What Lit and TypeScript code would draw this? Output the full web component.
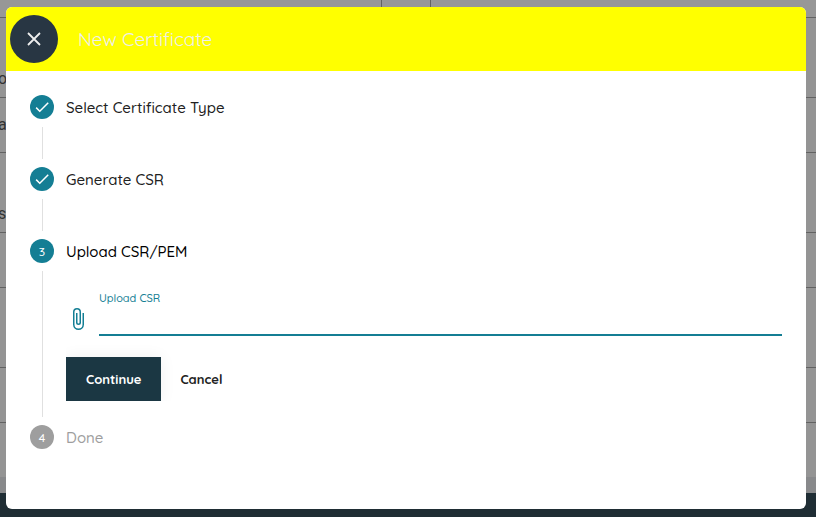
import { LitElement, html, css, svg } from "lit";
import { customElement, state } from "lit/decorators.js";
import { classMap } from "lit/directives/class-map.js";

interface Row {
  text: string;
  tall: boolean;
}

const rows: Row[] = [
  { text: "o", tall: true },
  { text: "a", tall: false },
  { text: "s", tall: true },
  { text: "", tall: false },
  { text: "", tall: true },
  { text: "", tall: false },
  { text: "", tall: false },
];

@customElement("page-backdrop")
class PageBackdrop extends LitElement {
  static styles = css`
    :host {
      display: flex;
      flex-direction: column;
      overflow: hidden;
      background: #88898b;
      color: #333;
      font: 16px/20px Roboto, sans-serif;
    }
    .head {
      display: grid;
      grid-template-columns: 381fr 49fr 386fr;
      height: 17px;
      background: #979797;
    }
    .cell + .cell {
      border-left: 1px solid #626262;
    }
    .row {
      box-sizing: border-box;
      height: 55px;
      border-top: 1px solid #626262;
      background: #949494;
      display: flex;
      align-items: center;
      text-indent: -2px;
    }
    .tall {
      height: 80px;
      align-items: flex-end;
      padding-bottom: 8px;
    }
    .foot {
      margin-top: auto;
      height: 24px;
      background: #1f2d34;
    }
  `;
  render() {
    return html`
      <div class="head">
        <div class="cell"></div>
        <div class="cell"></div>
        <div class="cell"></div>
      </div>
      ${rows.map((r) => html`<div class=${classMap({ row: true, tall: r.tall })}>${r.text}</div>`)}
      <div class="foot"></div>
    `;
  }
}

const check = svg`<svg class="check" viewBox="0 0 24 24" aria-hidden="true">
  <path d="M21 7 9 19l-5.500-5.500 1.410-1.410L9 16.170 19.590 5.590z" fill="currentColor"/></svg>`;

@customElement("app-root")
class AppRoot extends LitElement {
  static styles = css`
    :host {
      display: grid;
      min-height: 100vh;
      font-family: Quicksand, Lato, sans-serif;
      color: #212121;
    }
    page-backdrop,
    .dialog {
      grid-area: 1 / 1;
      min-width: 0;
    }
    .dialog {
      z-index: 1;
      margin: 7px 10px 8px 6px;
      border-radius: 6px;
      background: #fff;
      overflow: hidden;
    }
    .bar {
      display: flex;
      align-items: center;
      gap: 20px;
      height: 64px;
      padding: 0 4px;
      box-sizing: border-box;
      background: #ff0;
    }
    .close {
      display: grid;
      place-items: center;
      width: 48px;
      height: 48px;
      padding: 0;
      border: 0;
      border-radius: 50%;
      background: #283643;
      color: #eee;
    }
    .close svg {
      width: 24px;
      height: 24px;
    }
    .title {
      margin: 0;
      font-size: 19px;
      font-weight: 400;
      line-height: 24px;
      color: #eee;
    }
    .steps {
      list-style: none;
      margin: 0;
      padding: 24px;
    }
    .step {
      display: grid;
      grid-template-columns: 24px 1fr;
      column-gap: 12px;
    }
    .badge {
      display: grid;
      place-items: center;
      width: 24px;
      height: 24px;
      border-radius: 50%;
      background: #147e94;
      color: #fff;
      font-size: 12px;
      font-weight: 500;
    }
    .check {
      width: 18px;
      height: 18px;
    }
    .name {
      font-size: 15px;
      font-weight: 500;
      line-height: 26px;
    }
    .current .name {
      color: #000;
    }
    .later .badge {
      background: #9e9e9e;
    }
    .later .name {
      color: #9e9e9e;
    }
    .line {
      justify-self: center;
      width: 1px;
      min-height: 32px;
      margin: 6px 0 8px;
      background: #e0e0e0;
    }
    .content {
      padding: 26px 0 24px;
    }
    .field {
      display: grid;
      grid-template-columns: 24px 1fr;
      column-gap: 9px;
      align-items: end;
      color: #147e94;
    }
    .clip {
      width: 24px;
      height: 24px;
      margin-bottom: 5px;
    }
    .box {
      display: flex;
      flex-direction: column;
    }
    .label {
      font-size: 11px;
      font-weight: 500;
      line-height: 15px;
    }
    .input {
      height: 30px;
      padding: 0;
      border: 0;
      border-bottom: 2px solid #147e94;
      box-sizing: border-box;
      outline: 0;
      background: transparent;
      font: inherit;
      font-size: 15px;
    }
    .actions {
      display: flex;
      margin-top: 21px;
    }
    .button {
      height: 44px;
      padding: 0 19px;
      border: 0;
      background: transparent;
      color: #212121;
      font: inherit;
      font-size: 13px;
      font-weight: 700;
    }
    .primary {
      padding: 0 20px;
      background: #1b3743;
      color: #fff;
      box-shadow: 0 0 16px #00000010;
      clip-path: inset(-16px -16px 0 0);
    }
  `;

  @state() private file = "";

  render() {
    return html`
      <page-backdrop aria-hidden="true"></page-backdrop>
      <section class="dialog" role="dialog" aria-labelledby="title">
        <header class="bar">
          <button class="close" aria-label="Close">
            <svg viewBox="0 0 24 24" aria-hidden="true">
              <path d="M6 6l12 12M18 6L6 18" fill="none" stroke="currentColor" stroke-width="1.800" />
            </svg>
          </button>
          <h1 class="title" id="title">New Certificate</h1>
        </header>
        <ol class="steps">
          <li class="step">
            <span class="badge">${check}</span>
            <span class="name">Select Certificate Type</span>
            <span class="line"></span>
          </li>
          <li class="step">
            <span class="badge">${check}</span>
            <span class="name">Generate CSR</span>
            <span class="line"></span>
          </li>
          <li class="step current" aria-current="step">
            <span class="badge">3</span>
            <span class="name">Upload CSR/PEM</span>
            <span class="line"></span>
            <div class="content">
              <div class="field">
                <svg class="clip" viewBox="0 0 24 24" aria-hidden="true">
                  <path
                    d="M16.500 6v11.500a4 4 0 0 1-4 4 4 4 0 0 1-4-4V5A2.500 2.500 0 0 1 11 2.500 2.500 2.500 0 0 1 13.500 5v10.500a1 1 0 0 1-1 1 1 1 0 0 1-1-1V6H10v9.500a2.500 2.500 0 0 0 2.500 2.500 2.500 2.500 0 0 0 2.500-2.500V5a4 4 0 0 0-4-4 4 4 0 0 0-4 4v12.500a5.500 5.500 0 0 0 5.500 5.500 5.500 5.500 0 0 0 5.500-5.500V6z"
                    fill="currentColor"
                  />
                </svg>
                <div class="box">
                  <label class="label" for="csr">Upload CSR</label>
                  <input
                    class="input"
                    id="csr"
                    type="text"
                    .value=${this.file}
                    @input=${(e: Event) => (this.file = (e.target as HTMLInputElement).value)}
                  />
                </div>
              </div>
              <div class="actions">
                <button class="button primary">Continue</button>
                <button class="button">Cancel</button>
              </div>
            </div>
          </li>
          <li class="step later">
            <span class="badge">4</span>
            <span class="name">Done</span>
          </li>
        </ol>
      </section>
    `;
  }
}
